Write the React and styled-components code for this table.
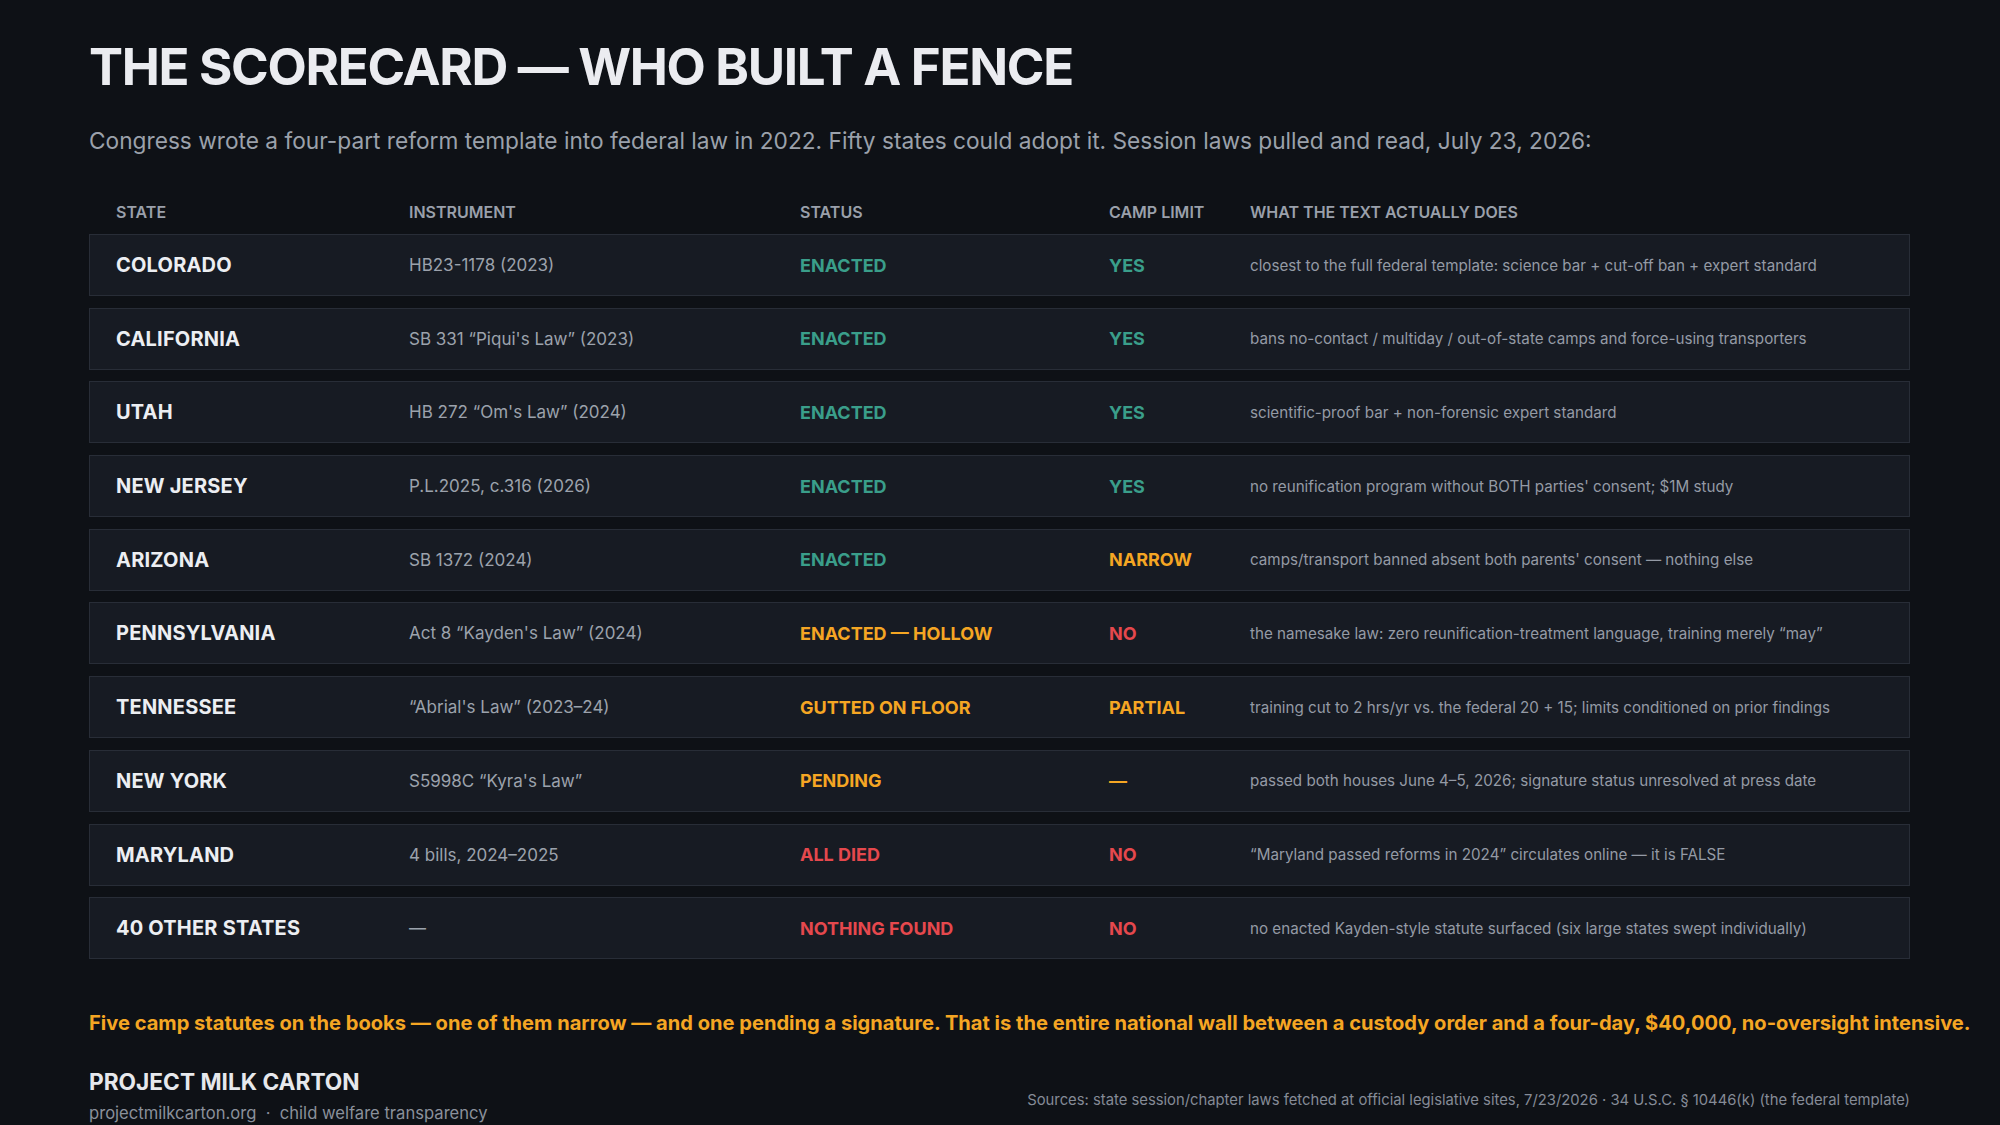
import React from "react";
import styled, { createGlobalStyle } from "styled-components";

const rows = [
  { state: "COLORADO", instrument: "HB23-1178 (2023)", status: "ENACTED", statusTone: "good", camp: "YES", campTone: "good", text: "closest to the full federal template: science bar + cut-off ban + expert standard" },
  { state: "CALIFORNIA", instrument: "SB 331 \u201cPiqui's Law\u201d (2023)", status: "ENACTED", statusTone: "good", camp: "YES", campTone: "good", text: "bans no-contact / multiday / out-of-state camps and force-using transporters" },
  { state: "UTAH", instrument: "HB 272 \u201cOm's Law\u201d (2024)", status: "ENACTED", statusTone: "good", camp: "YES", campTone: "good", text: "scientific-proof bar + non-forensic expert standard" },
  { state: "NEW JERSEY", instrument: "P.L.2025, c.316 (2026)", status: "ENACTED", statusTone: "good", camp: "YES", campTone: "good", text: "no reunification program without BOTH parties' consent; $1M study" },
  { state: "ARIZONA", instrument: "SB 1372 (2024)", status: "ENACTED", statusTone: "good", camp: "NARROW", campTone: "warn", text: "camps/transport banned absent both parents' consent \u2014 nothing else" },
  { state: "PENNSYLVANIA", instrument: "Act 8 \u201cKayden's Law\u201d (2024)", status: "ENACTED \u2014 HOLLOW", statusTone: "warn", camp: "NO", campTone: "bad", text: "the namesake law: zero reunification-treatment language, training merely \u201cmay\u201d" },
  { state: "TENNESSEE", instrument: "\u201cAbrial's Law\u201d (2023\u201324)", status: "GUTTED ON FLOOR", statusTone: "warn", camp: "PARTIAL", campTone: "warn", text: "training cut to 2 hrs/yr vs. the federal 20 + 15; limits conditioned on prior findings" },
  { state: "NEW YORK", instrument: "S5998C \u201cKyra's Law\u201d", status: "PENDING", statusTone: "warn", camp: "\u2014", campTone: "warn", text: "passed both houses June 4\u20135, 2026; signature status unresolved at press date" },
  { state: "MARYLAND", instrument: "4 bills, 2024\u20132025", status: "ALL DIED", statusTone: "bad", camp: "NO", campTone: "bad", text: "\u201cMaryland passed reforms in 2024\u201d circulates online \u2014 it is FALSE" },
  { state: "40 OTHER STATES", instrument: "\u2014", status: "NOTHING FOUND", statusTone: "bad", camp: "NO", campTone: "bad", text: "no enacted Kayden-style statute surfaced (six large states swept individually)" },
];

const tones = {
  good: "#3a9e8a",
  warn: "#f5a623",
  bad: "#e5484d",
};

const GlobalStyle = createGlobalStyle`
  html, body {
    margin: 0;
    padding: 0;
    background: #0e1116;
  }
  body {
    font-family: Inter, "Noto Sans", "Liberation Sans", sans-serif;
    -webkit-font-smoothing: antialiased;
  }
`;

const Page = styled.div`
  width: 2000px;
  height: 1125px;
  box-sizing: border-box;
  padding: 37px 90px 0 89px;
  background: #0e1116;
  color: #e8eaee;
  overflow: hidden;
`;

const Title = styled.h1`
  margin: 0;
  font-size: 51px;
  line-height: 60px;
  font-weight: 700;
  letter-spacing: -1.3px;
  color: #ebecf0;
`;

const Subtitle = styled.p`
  margin: 29px 0 0;
  font-size: 22.7px;
  line-height: 30px;
  color: #9ba1ab;
`;

const Grid = `
  display: grid;
  grid-template-columns: 293px 391px 309px 141px 1fr;
  align-items: center;
`;

const HeadRow = styled.div`
  ${Grid}
  margin-top: 46px;
  padding: 0 27px 12px;
`;

const HeadCell = styled.div`
  font-size: 16px;
  line-height: 20px;
  font-weight: 600;
  color: #9aa0ab;
`;

const Rows = styled.div`
  display: flex;
  flex-direction: column;
  gap: 11.7px;
`;

const Row = styled.div`
  ${Grid}
  height: 62px;
  box-sizing: border-box;
  padding: 0 26px;
  background: #171b23;
  border: 1px solid #282d37;
`;

const StateCell = styled.div`
  font-size: 20px;
  font-weight: 700;
  letter-spacing: 0.2px;
  color: #eceef2;
`;

const InstrumentCell = styled.div`
  font-size: 17px;
  color: #9ca2ac;
`;

const Tag = styled.div`
  font-size: 18px;
  font-weight: 700;
  color: ${(props) => tones[props.tone]};
`;

const TextCell = styled.div`
  font-size: 15.2px;
  color: #949aa5;
`;

const Callout = styled.p`
  margin: 52px 0 0;
  font-size: 20.1px;
  line-height: 24px;
  font-weight: 700;
  color: #f5a623;
  white-space: nowrap;
`;

const Footer = styled.div`
  display: flex;
  justify-content: space-between;
  align-items: center;
  margin-top: 33px;
`;

const Brand = styled.div`
  display: flex;
  flex-direction: column;
  gap: 7px;
`;

const BrandName = styled.div`
  font-size: 22.7px;
  line-height: 28px;
  font-weight: 700;
  color: #e6e8ec;
`;

const BrandLine = styled.div`
  font-size: 16.6px;
  line-height: 20px;
  color: #8a909b;
`;

const Sources = styled.div`
  font-size: 14.8px;
  color: #858b96;
  padding-top: 8px;
`;

export default function App() {
  return (
    <>
      <GlobalStyle />
      <Page>
        <Title>THE SCORECARD — WHO BUILT A FENCE</Title>
        <Subtitle>
          Congress wrote a four-part reform template into federal law in 2022. Fifty states could adopt it. Session laws pulled and read, July 23, 2026:
        </Subtitle>
        <HeadRow>
          <HeadCell>STATE</HeadCell>
          <HeadCell>INSTRUMENT</HeadCell>
          <HeadCell>STATUS</HeadCell>
          <HeadCell>CAMP LIMIT</HeadCell>
          <HeadCell>WHAT THE TEXT ACTUALLY DOES</HeadCell>
        </HeadRow>
        <Rows>
          {rows.map((r) => (
            <Row key={r.state}>
              <StateCell>{r.state}</StateCell>
              <InstrumentCell>{r.instrument}</InstrumentCell>
              <Tag tone={r.statusTone}>{r.status}</Tag>
              <Tag tone={r.campTone}>{r.camp}</Tag>
              <TextCell>{r.text}</TextCell>
            </Row>
          ))}
        </Rows>
        <Callout>
          Five camp statutes on the books — one of them narrow — and one pending a signature. That is the entire national wall between a custody order and a four-day, $40,000, no-oversight intensive.
        </Callout>
        <Footer>
          <Brand>
            <BrandName>PROJECT MILK CARTON</BrandName>
            <BrandLine>projectmilkcarton.org &nbsp;·&nbsp; child welfare transparency</BrandLine>
          </Brand>
          <Sources>
            Sources: state session/chapter laws fetched at official legislative sites, 7/23/2026 · 34 U.S.C. § 10446(k) (the federal template)
          </Sources>
        </Footer>
      </Page>
    </>
  );
}
